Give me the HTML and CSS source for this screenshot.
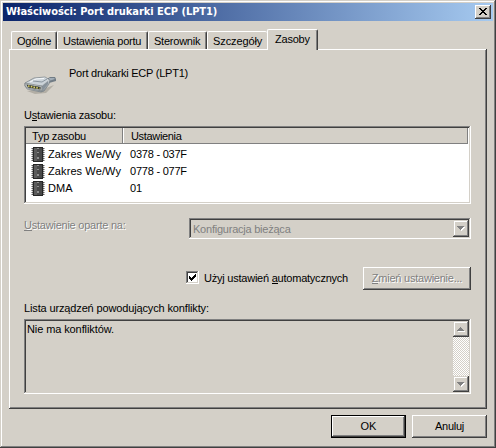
FILE: index.html
```html
<!DOCTYPE html>
<html lang="pl">
<head>
<meta charset="utf-8">
<title>Właściwości: Port drukarki ECP (LPT1)</title>
<link rel="stylesheet" href="styles.css">
</head>
<body>
<svg class="defs" width="0" height="0">
  <symbol id="chip" viewBox="0 0 14 15">
    <path d="M.5 1.500h13M.5 3.500h13M.5 5.500h13M.5 7.500h13M.5 9.500h13M.5 11.500h13M.5 13.500h13" stroke="#5a5a5a"/>
    <path d="M1 2.500h12M1 4.500h12M1 6.500h12M1 8.500h12M1 10.500h12M1 12.500h12" stroke="#c4c4c4"/>
    <rect x="2.500" y=".5" width="9" height="14" fill="#484848" stroke="#262626"/>
    <rect x="3" y="1" width="3" height="13" fill="#5c5c5c"/>
    <path d="M6 1h2v1H6zM6 5h2v1H6zM6 10h2v2H6z" fill="#909090"/>
  </symbol>
</svg>
<div class="window">
  <header class="titlebar">
    <span class="title">Właściwości: Port drukarki ECP (LPT1)</span>
    <button class="close" aria-label="Zamknij"><svg width="8" height="7" shape-rendering="crispEdges"><path d="M0 0h2v1h1v1h2V1h1V0h2v1H7v1H6v1H5v1h1v1h1v1h1v1H6V6H5V5H3v1H2v1H0V6h1V5h1V4h1V3H2V2H1V1H0z"/></svg></button>
  </header>
  <nav class="tabs">
    <div class="tab t1">Ogólne</div>
    <div class="tab t2">Ustawienia portu</div>
    <div class="tab t3">Sterownik</div>
    <div class="tab t4">Szczegóły</div>
    <div class="tab active">Zasoby</div>
  </nav>
  <main class="panel">
    <div class="device">
      <svg class="port" width="34" height="20" viewBox="0 0 34 20">
        <defs><linearGradient id="metal" x1="0" y1="0" x2="1" y2="1"><stop offset="0" stop-color="#a3abb1"/><stop offset=".4" stop-color="#eef2f5"/><stop offset="1" stop-color="#6a747b"/></linearGradient></defs>
        <path d="M3 15l8 3 11-1 6-6 2-2-8 3z" fill="#a49f96" opacity=".7"/>
        <path d="M23 3l3-2h5l1 2v2l-7 2-3 2z" fill="#717c85"/>
        <path d="M25 2h5l1 1-6 2z" fill="#a2adb7"/>
        <path d="M1 7L10 2l11-1 5 3-1 4-5 7-3 1-14-3-2-3z" fill="url(#metal)" stroke="#767f86" stroke-width=".7"/>
        <path d="M3 7l8-4 10-1 3 2-6 5z" fill="#cbd3d9"/>
        <path d="M6 6l6-3 8-.5" stroke="#f6f9fb" fill="none"/>
        <path d="M9 5l9 1 5-3" stroke="#8b96a0" fill="none"/>
        <path d="M18 10l6-5v3l-5 6z" fill="#87919a"/>
        <path d="M1 7l17 3v5L3 12 1 10z" fill="#b9bec1" stroke="#6c7376" stroke-width=".6"/>
        <path d="M2.500 8.500l14 2.500v2.500L4 11.500z" fill="#34382c"/>
        <path d="M4 10l11.500 2.300" stroke="#d8cf69" stroke-width="1.600" stroke-dasharray="1.600 1.200"/>
      </svg>
      <span class="device-name">Port drukarki ECP (LPT1)</span>
    </div>
    <div class="label l-res">U<u>s</u>tawienia zasobu:</div>
    <div class="list">
      <div class="list-head"><div class="col1">Typ zasobu</div><div class="col2">Ustawienia</div></div>
      <div class="row"><svg width="14" height="15"><use href="#chip"/></svg><span class="type wide">Zakres We/Wy</span><span>0378 - 037F</span></div>
      <div class="row"><svg width="14" height="15"><use href="#chip"/></svg><span class="type wide">Zakres We/Wy</span><span>0778 - 077F</span></div>
      <div class="row"><svg width="14" height="15"><use href="#chip"/></svg><span class="type wide">DMA</span><span>01</span></div>
    </div>
    <div class="based">
      <span class="disabled"><u>U</u>stawienie oparte na:</span>
      <div class="select"><span>Konfiguracja bieżąca</span><div class="arrow"><svg width="8" height="5" shape-rendering="crispEdges"><path d="M1 1h7v1H7v1H6v1H5v1H4V4H3V3H2V2H1z" fill="#fff"/><path d="M0 0h7v1H6v1H5v1H4v1H3V3H2V2H1V1H0z" fill="#808080"/></svg></div></div>
    </div>
    <div class="auto">
      <div class="check"><svg width="7" height="7" shape-rendering="crispEdges"><path d="M0 2h1v1h1v1h1V3h1V2h1V1h1V0h1v3H6v1H5v1H4v1H3v1H2V6H1V5H0z"/></svg></div>
      <span class="check-label">Użyj ustawień <u>a</u>utomatycznych</span>
      <button class="btn change"><span class="disabled"><u>Z</u>mień ustawienie...</span></button>
    </div>
    <div class="label l-conf">Lista urządzeń powodujących konflikty:</div>
    <div class="textarea">
      <div class="message">Nie ma konfliktów.</div>
      <div class="scroll">
        <div class="arrow"><svg width="8" height="5" shape-rendering="crispEdges"><path d="M4 1h1v1h1v1h1v1h1v1H1V4h1V3h1V2h1z" fill="#fff"/><path d="M3 0h1v1h1v1h1v1h1v1H0V3h1V2h1V1h1z" fill="#808080"/></svg></div>
        <div class="arrow"><svg width="8" height="5" shape-rendering="crispEdges"><path d="M1 1h7v1H7v1H6v1H5v1H4V4H3V3H2V2H1z" fill="#fff"/><path d="M0 0h7v1H6v1H5v1H4v1H3V3H2V2H1V1H0z" fill="#808080"/></svg></div>
      </div>
    </div>
  </main>
  <footer class="actions">
    <button class="btn default"><span class="ok">OK</span></button>
    <button class="btn"><span>Anuluj</span></button>
  </footer>
</div>
</body>
</html>
```

FILE: styles.css
```css
* { box-sizing: border-box; }
body {
  margin: 0;
  font: 11px/13px "Liberation Sans", Arial, sans-serif;
  letter-spacing: -0.23px;
  color: #000;
  white-space: nowrap;
}
svg { display: block; flex: none; }
.defs { display: none; }
button { font: inherit; letter-spacing: inherit; color: inherit; margin: 0; padding: 0; border: 0; border-radius: 0; }
u { text-decoration: none; box-shadow: inset 0 -1px currentColor; display: inline-block; height: 12px; line-height: 13px; vertical-align: top; }

.window {
  width: 496px;
  height: 448px;
  padding: 3px;
  background: #d4d0c8;
  box-shadow: inset -1px -1px #404040, inset 1px 1px #d4d0c8, inset -2px -2px #808080, inset 2px 2px #fff;
}
.titlebar {
  display: flex;
  align-items: center;
  justify-content: space-between;
  height: 18px;
  padding: 0 2px 0 3px;
  background: linear-gradient(90deg, #0a246a, #a6caf0);
}
.title {
  color: #fff;
  font: bold 11px/18px "DejaVu Sans Condensed", "DejaVu Sans", sans-serif;
  font-stretch: condensed;
  letter-spacing: -0.06px;
}
.close {
  display: flex;
  align-items: flex-start;
  width: 16px;
  height: 14px;
  padding: 3px 0 0 4px;
  background: #d4d0c8;
  box-shadow: inset -1px -1px #404040, inset 1px 1px #fff, inset -2px -2px #808080;
}

.tabs { display: flex; align-items: flex-end; height: 28px; padding-left: 8px; }
.tab {
  position: relative;
  height: 18px;
  line-height: 18px;
  border-top: 1px solid #fff;
  border-left: 1px solid #fff;
  border-right: 1px solid #404040;
  border-radius: 2px 2px 0 0;
  box-shadow: inset -1px 0 #808080;
  padding-left: 5px;
}
.t1 { width: 46px; }
.t2 { width: 91px; }
.t3 { width: 59px; }
.t4 { width: 60px; letter-spacing: -0.1px; border-right: 0; box-shadow: none; }
.active { width: 51px; height: 21px; margin-bottom: -1px; padding-left: 7px; background: #d4d0c8; }

.panel {
  width: 478px;
  height: 360px;
  margin-left: 6px;
  padding: 1px 16px 0 15px;
  box-shadow: inset -1px -1px #404040, inset 1px 1px #fff, inset -2px -2px #808080;
}
.device { display: flex; height: 59px; padding-top: 17px; }
.port { margin: 9px 11px 0 0; }
.l-res { height: 17px; letter-spacing: -0.2px; }
.list {
  width: 447px;
  height: 78px;
  padding: 2px;
  background: #fff;
  box-shadow: inset -1px -1px #fff, inset 1px 1px #808080, inset -2px -2px #d4d0c8, inset 2px 2px #404040;
}
.list-head { display: flex; height: 16px; width: 442px; line-height: 17px; background: #d4d0c8; border-bottom: 1px solid #808080; border-right: 1px solid #808080; }
.col1 { width: 97px; padding-left: 6px; border-right: 1px solid #808080; }
.col2 { flex: 1; padding-left: 7px; border-left: 1px solid #fff; letter-spacing: -0.33px; }
.row { display: flex; align-items: center; height: 17px; padding: 1px 0 0 5px; }
.row:nth-child(2) { margin-top: 1px; }
.type { width: 82px; margin-left: 3px; }
.wide { letter-spacing: 0.1px; }

.based { display: flex; justify-content: space-between; height: 35px; margin-top: 14px; }
.disabled { color: #808080; text-shadow: 1px 1px #fff; }
.disabled u { box-shadow: inset 0 -1px #808080; }
.select {
  display: flex;
  justify-content: space-between;
  width: 282px;
  height: 21px;
  padding: 2px;
  color: #808080;
  line-height: 18px;
  box-shadow: inset -1px -1px #fff, inset 1px 1px #808080, inset -2px -2px #d4d0c8, inset 2px 2px #404040;
}
.based > .disabled { padding-top: 1px; }
.select span { padding-left: 2px; }
.arrow {
  display: flex;
  align-items: center;
  justify-content: center;
  width: 16px;
  height: 17px;
  background: #d4d0c8;
  box-shadow: inset -1px -1px #404040, inset 1px 1px #d4d0c8, inset -2px -2px #808080, inset 2px 2px #fff;
}

.auto { display: flex; height: 35px; margin-top: 14px; padding-left: 162px; }
.check {
  width: 13px;
  height: 13px;
  margin-top: 4px;
  padding: 3px;
  background: #fff;
  box-shadow: inset -1px -1px #fff, inset 1px 1px #808080, inset -2px -2px #d4d0c8, inset 2px 2px #404040;
}
.check-label { margin: 5px 0 0 5px; }
.btn {
  display: flex;
  align-items: center;
  justify-content: center;
  width: 75px;
  height: 23px;
  background: #d4d0c8;
  box-shadow: inset -1px -1px #404040, inset 1px 1px #fff, inset -2px -2px #808080;
}
.change { width: 108px; margin-left: auto; }
.l-conf { height: 17px; letter-spacing: -0.14px; }
.textarea {
  display: flex;
  justify-content: space-between;
  width: 447px;
  height: 75px;
  padding: 2px;
  box-shadow: inset -1px -1px #fff, inset 1px 1px #808080, inset -2px -2px #d4d0c8, inset 2px 2px #404040;
}
.message { padding: 2px 0 0 1px; letter-spacing: -0.1px; }
.scroll {
  display: flex;
  flex-direction: column;
  justify-content: space-between;
  width: 16px;
  background: repeating-conic-gradient(#fff 0 25%, #d4d0c8 0 50%) 0 0 / 2px 2px;
}
.scroll .arrow { height: 16px; }
.actions { display: flex; justify-content: flex-end; gap: 6px; padding: 6px 6px 0 0; }
.default { border: 1px solid #000; box-shadow: inset -1px -1px #404040, inset 1px 1px #fff, inset -2px -2px #808080; }
.ok { letter-spacing: 0; }
```
